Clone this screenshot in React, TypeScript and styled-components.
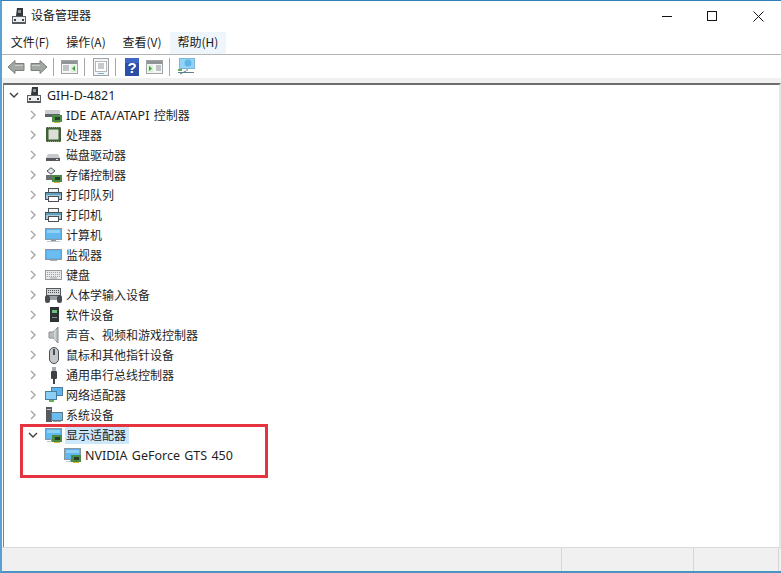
import React from 'react';
import styled, { createGlobalStyle } from 'styled-components';

const GlobalStyle = createGlobalStyle`
  html, body {
    margin: 0;
    padding: 0;
    background: #fff;
  }
  body {
    font-family: "Noto Sans CJK SC", "Liberation Sans", sans-serif;
  }
`;

type IconName =
  | 'device' | 'ide' | 'cpu' | 'disk' | 'storage' | 'printer' | 'computer' | 'monitor' | 'keyboard'
  | 'hid' | 'software' | 'sound' | 'mouse' | 'usb' | 'network' | 'system' | 'display';

const Chip = () => (
  <g>
    <rect x="7" y="8" width="10" height="7" fill="#4a8a44" />
    <rect x="10" y="10" width="5" height="3" fill="#24402a" />
    <rect x="9" y="15" width="6" height="1" fill="#d9b23c" />
  </g>
);

const Screen = () => (
  <g>
    <rect x="0.5" y="1.5" width="16" height="11" fill="#5db3ec" stroke="#8b98a2" />
    <rect x="2" y="3" width="13" height="8" fill="#62b9f0" />
    <rect x="2" y="3" width="13" height="3" fill="#8fd0f6" />
    <rect x="6" y="13" width="5" height="1" fill="#8a949c" />
    <rect x="2" y="14" width="13" height="1" fill="#c0c7cc" />
  </g>
);

const DeviceIcon = ({ name }: { name: IconName }) => {
  switch (name) {
    case 'device':
      return (
        <svg width="16" height="17" viewBox="0 0 16 17">
          <path d="M6 0h6v8H5z" fill="#33373b" />
          <rect x="7" y="2" width="3" height="3" fill="#8d9296" />
          <rect x="1.5" y="8.5" width="13" height="7" fill="#eceeef" stroke="#5c6064" />
          <rect x="3" y="11" width="2" height="2" fill="#3f4347" />
          <rect x="11" y="11" width="2" height="2" fill="#3f4347" />
          <rect x="2" y="14" width="12" height="2" fill="#55595d" />
        </svg>
      );
    case 'ide':
      return (
        <svg width="18" height="16" viewBox="0 0 18 16">
          <rect x="0" y="3" width="15" height="4" rx="1" fill="#c9cdd0" />
          <rect x="0" y="7" width="15" height="3" fill="#5c6165" />
          <Chip />
        </svg>
      );
    case 'cpu':
      return (
        <svg width="18" height="16" viewBox="0 0 18 16">
          <rect x="1" y="0" width="15" height="15" fill="#3f6135" />
          <rect x="3.5" y="2.5" width="10" height="10" fill="#dcdfd6" />
          <path d="M1 0.5h15M1 14.5h15" stroke="#8ba07f" strokeDasharray="1 1" />
        </svg>
      );
    case 'disk':
      return (
        <svg width="18" height="16" viewBox="0 0 18 16">
          <path d="M3 7h10l2 4H1z" fill="#c6c9cc" />
          <rect x="1" y="11" width="14" height="3" fill="#55595d" />
          <rect x="11" y="12" width="2" height="1" fill="#e3e6e8" />
        </svg>
      );
    case 'storage':
      return (
        <svg width="18" height="16" viewBox="0 0 18 16">
          <path d="M2 4 L6 0.8 L10 4 L6 7.2 Z" fill="#e6e8ea" stroke="#4c5054" />
          <rect x="1" y="8" width="8" height="5" fill="#6a6f73" />
          <Chip />
        </svg>
      );
    case 'printer':
      return (
        <svg width="18" height="16" viewBox="0 0 18 16">
          <rect x="3.5" y="1.5" width="10" height="4" fill="#f2f4f5" stroke="#50565c" />
          <rect x="0.5" y="5.5" width="16" height="7" fill="#a9c8d8" stroke="#474d52" />
          <rect x="1" y="6" width="15" height="2" fill="#5fa2bd" />
          <rect x="3.5" y="9.5" width="10" height="5" fill="#fff" stroke="#4a5056" />
        </svg>
      );
    case 'computer':
      return (
        <svg width="18" height="16" viewBox="0 0 18 16">
          <Screen />
        </svg>
      );
    case 'monitor':
      return (
        <svg width="18" height="16" viewBox="0 0 18 16">
          <rect x="0.5" y="2.5" width="16" height="10" fill="#5db3ec" stroke="#8b98a2" />
          <rect x="2" y="4" width="13" height="7" fill="#69bdf1" />
          <rect x="5" y="13" width="7" height="1" fill="#a4adb4" />
        </svg>
      );
    case 'keyboard':
      return (
        <svg width="18" height="16" viewBox="0 0 18 16">
          <rect x="0.5" y="3.5" width="16" height="9" fill="#e7e8ea" stroke="#979b9f" />
          <path d="M2 5.5h13M2 7.5h13M2 9.5h13" stroke="#a2a6aa" strokeDasharray="1 1" />
          <rect x="5" y="10.5" width="7" height="1" fill="#a2a6aa" />
        </svg>
      );
    case 'hid':
      return (
        <svg width="18" height="16" viewBox="0 0 18 16">
          <rect x="1.5" y="1.5" width="14" height="7" fill="#d3d6d9" stroke="#54595e" />
          <path d="M3 3.5h11M3 5.5h11" stroke="#50555a" strokeDasharray="1 1" />
          <rect x="0" y="8" width="5" height="8" rx="2.5" fill="#474c51" />
          <rect x="12" y="8" width="5" height="8" rx="2.5" fill="#474c51" />
          <rect x="5" y="9" width="7" height="4" fill="#9ba0a4" />
        </svg>
      );
    case 'software':
      return (
        <svg width="18" height="16" viewBox="0 0 18 16">
          <rect x="5" y="0" width="9" height="15" fill="#2e3335" />
          <rect x="7" y="3" width="5" height="3" fill="#6cc07a" />
          <rect x="7" y="10" width="5" height="1" fill="#8a8f92" />
        </svg>
      );
    case 'sound':
      return (
        <svg width="18" height="18" viewBox="0 0 18 18">
          <path d="M4 6h4l5-5v16l-5-5H4z" fill="#b7bcbf" stroke="#8a8f93" />
          <path d="M10 3v12" stroke="#e4e6e8" />
        </svg>
      );
    case 'mouse':
      return (
        <svg width="18" height="17" viewBox="0 0 18 17">
          <rect x="4.5" y="0.5" width="9" height="16" rx="4.5" fill="#c5c9cc" stroke="#4a4f53" />
          <rect x="8" y="2" width="2" height="6" fill="#4a4f53" />
        </svg>
      );
    case 'usb':
      return (
        <svg width="18" height="17" viewBox="0 0 18 17">
          <rect x="7" y="0" width="4" height="4" fill="#a6aaad" />
          <rect x="6" y="4" width="6" height="8" rx="1" fill="#3e4246" />
          <rect x="8" y="12" width="2" height="5" fill="#3e4246" />
        </svg>
      );
    case 'network':
      return (
        <svg width="18" height="16" viewBox="0 0 18 16">
          <rect x="6.5" y="0.5" width="11" height="8" fill="#5fb5ec" stroke="#4a7d9e" />
          <rect x="0.5" y="4.5" width="11" height="8" fill="#8ad0f6" stroke="#4a7d9e" />
          <rect x="4" y="13" width="5" height="2" fill="#5fb04f" />
        </svg>
      );
    case 'system':
      return (
        <svg width="18" height="16" viewBox="0 0 18 16">
          <rect x="1" y="0" width="6" height="15" fill="#565b5f" />
          <rect x="2" y="2" width="4" height="1" fill="#c4c8cb" />
          <rect x="6.5" y="5.5" width="11" height="8" fill="#6bbdf0" stroke="#5d7888" />
          <rect x="8" y="14" width="8" height="1" fill="#9aa0a4" />
        </svg>
      );
    case 'display':
      return (
        <svg width="18" height="16" viewBox="0 0 18 16">
          <Screen />
          <Chip />
        </svg>
      );
  }
};

const Window = styled.div`
  width: 781px;
  height: 573px;
  box-sizing: border-box;
  display: flex;
  flex-direction: column;
  background: #fff;
  border-top: 1px solid #2f7fb8;
  border-left: 2px solid #5aa0d0;
  border-bottom: 2px solid #4a94c4;
  overflow: hidden;
`;

const TitleBar = styled.div`
  height: 30px;
  display: flex;
  align-items: center;
  padding-left: 6px;
  flex-shrink: 0;
`;

const TitleText = styled.span`
  font-size: 12px;
  line-height: 16px;
  margin-bottom: 2px;
  color: #1a1a1a;
  flex: 1;
`;

const WindowButton = styled.div`
  width: 45.5px;
  height: 30px;
  display: flex;
  align-items: center;
  justify-content: center;
`;

const MenuBar = styled.div`
  height: 23px;
  display: flex;
  align-items: center;
  padding-left: 0;
  flex-shrink: 0;
  border-bottom: 1px solid #b4b4b4;
`;

const MenuItem = styled.div<{ $active?: boolean }>`
  width: 56px;
  height: 22px;
  text-align: center;
  font-size: 12px;
  line-height: 20px;
  color: #1a1a1a;
  background: ${(p) => (p.$active ? '#eef6fb' : 'transparent')};
`;

const ToolBar = styled.div`
  height: 23px;
  display: flex;
  align-items: center;
  padding-left: 2px;
  flex-shrink: 0;
  background: #fff;
`;

const ToolSeparator = styled.div`
  width: 1px;
  height: 18px;
  margin: 0 4px 0 3px;
  background: #a6a6a6;
`;

const ToolButton = styled.div`
  width: 23px;
  height: 23px;
  display: flex;
  align-items: center;
  justify-content: center;
`;

const PaneGap = styled.div`
  height: 5px;
  flex-shrink: 0;
  background: #f0f0f0;
`;

const TreePane = styled.div`
  flex: 1;
  margin-left: 1px;
  border-top: 2px solid #6d6d6d;
  border-left: 1px solid #7f7f7f;
  border-right: 2px solid #e6e6e6;
  background: #fff;
  min-height: 0;
  position: relative;
`;

const TreeRow = styled.div<{ $level: number }>`
  height: 20px;
  display: flex;
  align-items: center;
  padding-left: ${(p) => 1 + p.$level * 19}px;
`;

const Twist = styled.div`
  width: 18px;
  height: 20px;
  flex-shrink: 0;
  display: flex;
  align-items: center;
  justify-content: center;
`;

const IconSlot = styled.div`
  width: 18px;
  height: 17px;
  flex-shrink: 0;
  margin: 0 2px 0 3px;
  display: flex;
  align-items: center;
`;

const RowLabel = styled.span<{ $selected?: boolean }>`
  font-size: 12px;
  line-height: 18px;
  height: 18px;
  padding: 0 3px 0 1px;
  color: #1f1f1f;
  white-space: nowrap;
  background: ${(p) => (p.$selected ? '#cde8fb' : 'transparent')};
`;

const LatinText = styled.span`
  font-family: "Noto Sans", "Liberation Sans", sans-serif;
  font-size: 12.5px;
  word-spacing: 1px;
`;

const Highlight = styled.div`
  position: absolute;
  left: 16px;
  top: 339px;
  width: 248px;
  height: 54px;
  box-sizing: border-box;
  border: 3px solid #e5343f;
  pointer-events: none;
`;

const StatusBar = styled.div`
  height: 23px;
  flex-shrink: 0;
  background: #f0f0f0;
  border-top: 1px solid #d9d9d9;
  display: flex;
  justify-content: flex-end;
`;

const StatusCell = styled.div<{ $width: number }>`
  width: ${(p) => p.$width}px;
  box-sizing: border-box;
  border-left: 1px solid #d6d6d6;
`;

const StatusEnd = styled.div`
  width: 3px;
  box-sizing: border-box;
  border-left: 1px solid #d6d6d6;
`;

const ChevronRight = () => (
  <svg width="8" height="10" viewBox="0 0 8 10">
    <path d="M2 1 L6 5 L2 9" fill="none" stroke="#a6a6a6" strokeWidth="1.4" />
  </svg>
);

const ChevronDown = () => (
  <svg width="10" height="8" viewBox="0 0 10 8">
    <path d="M1 2 L5 6 L9 2" fill="none" stroke="#404040" strokeWidth="1.4" />
  </svg>
);

const Arrow = ({ flip }: { flip?: boolean }) => (
  <svg width="18" height="16" viewBox="0 0 18 16" style={flip ? { transform: 'scaleX(-1)' } : undefined}>
    <path d="M1 8 L8 1.5 V4.5 H17 V11.5 H8 V14.5 Z" fill="#a3a7a3" stroke="#7b807a" strokeLinejoin="round" />
    <path d="M8 6.5h8" stroke="#c9ccc9" />
  </svg>
);

const PaneIcon = ({ play }: { play?: boolean }) => (
  <svg width="17" height="16" viewBox="0 0 17 16">
    <rect x="0.5" y="1.5" width="16" height="13" fill="#f6f6f6" stroke="#9ea3a7" />
    <rect x="1" y="2" width="15" height="3" fill="#8f9498" />
    <rect x={play ? 2 : 10} y="6" width="5" height="7" fill="#d9efd6" />
    <path d={play ? 'M3 7 L6 9.5 L3 12 Z' : 'M14 7 L11 9.5 L14 12 Z'} fill="#3f9a3f" />
    <path d={play ? 'M10 7h5M10 9h5M10 11h5' : 'M2 7h6M2 9h6M2 11h6'} stroke="#8a8f93" />
  </svg>
);

interface Row {
  label: string;
  latin?: string;
  icon: IconName;
}

const rows: Row[] = [
  { label: '控制器', latin: 'IDE ATA/ATAPI ', icon: 'ide' },
  { label: '处理器', icon: 'cpu' },
  { label: '磁盘驱动器', icon: 'disk' },
  { label: '存储控制器', icon: 'storage' },
  { label: '打印队列', icon: 'printer' },
  { label: '打印机', icon: 'printer' },
  { label: '计算机', icon: 'computer' },
  { label: '监视器', icon: 'monitor' },
  { label: '键盘', icon: 'keyboard' },
  { label: '人体学输入设备', icon: 'hid' },
  { label: '软件设备', icon: 'software' },
  { label: '声音、视频和游戏控制器', icon: 'sound' },
  { label: '鼠标和其他指针设备', icon: 'mouse' },
  { label: '通用串行总线控制器', icon: 'usb' },
  { label: '网络适配器', icon: 'network' },
  { label: '系统设备', icon: 'system' },
];

const menus = ['文件(F)', '操作(A)', '查看(V)', '帮助(H)'];

export default function App() {
  return (
    <>
      <GlobalStyle />
      <Window>
        <TitleBar>
          <IconSlot><DeviceIcon name="device" /></IconSlot>
          <TitleText>设备管理器</TitleText>
          <WindowButton>
            <svg width="11" height="11" viewBox="0 0 11 11">
              <path d="M0 5.5h10" stroke="#111" />
            </svg>
          </WindowButton>
          <WindowButton>
            <svg width="11" height="11" viewBox="0 0 11 11">
              <rect x="0.5" y="0.5" width="9" height="9" fill="none" stroke="#111" />
            </svg>
          </WindowButton>
          <WindowButton>
            <svg width="11" height="11" viewBox="0 0 11 11">
              <path d="M0.5 0.5l10 10M10.5 0.5l-10 10" stroke="#111" />
            </svg>
          </WindowButton>
        </TitleBar>
        <MenuBar>
          {menus.map((m, i) => (
            <MenuItem key={m} $active={i === 3}>{m}</MenuItem>
          ))}
        </MenuBar>
        <ToolBar>
          <ToolButton><Arrow /></ToolButton>
          <ToolButton><Arrow flip /></ToolButton>
          <ToolSeparator />
          <ToolButton><PaneIcon /></ToolButton>
          <ToolSeparator />
          <ToolButton>
            <svg width="16" height="18" viewBox="0 0 16 18">
              <rect x="0.5" y="0.5" width="15" height="17" fill="#f4f4f4" stroke="#9ea3a7" />
              <rect x="2.5" y="3.5" width="11" height="10" fill="#fff" stroke="#b4b8bb" />
              <path d="M5 6h6M5 8h6M5 10h6" stroke="#8f9498" />
              <rect x="5" y="15" width="6" height="1" fill="#6fb3dc" />
            </svg>
          </ToolButton>
          <ToolSeparator />
          <ToolButton>
            <svg width="14" height="18" viewBox="0 0 14 18">
              <rect x="0" y="0" width="14" height="18" fill="#2c4ea8" />
              <rect x="0" y="0" width="14" height="5" fill="#3f66c4" />
              <text x="7" y="14.5" textAnchor="middle" fontSize="15" fontWeight="700" fill="#fff" fontFamily="Liberation Sans">?</text>
            </svg>
          </ToolButton>
          <ToolButton><PaneIcon play /></ToolButton>
          <ToolSeparator />
          <ToolButton>
            <svg width="18" height="17" viewBox="0 0 18 17">
              <rect x="2.5" y="0.5" width="15" height="10" fill="#93d3f7" stroke="#7fb5d6" />
              <circle cx="11" cy="5" r="3.5" fill="#5fb4ea" />
              <path d="M10 11v2M1 14.5h16M9 13L3 16" stroke="#5e7f8f" fill="none" />
              <rect x="1" y="11" width="4" height="2" fill="#5fb04f" />
            </svg>
          </ToolButton>
        </ToolBar>
        <PaneGap />
        <TreePane>
          <TreeRow $level={0}>
            <Twist><ChevronDown /></Twist>
            <IconSlot><DeviceIcon name="device" /></IconSlot>
            <RowLabel><LatinText>GIH-D-4821</LatinText></RowLabel>
          </TreeRow>
          {rows.map((r) => (
            <TreeRow key={r.label} $level={1}>
              <Twist><ChevronRight /></Twist>
              <IconSlot><DeviceIcon name={r.icon} /></IconSlot>
              <RowLabel>
                {r.latin && <LatinText>{r.latin}</LatinText>}
                {r.label}
              </RowLabel>
            </TreeRow>
          ))}
          <TreeRow $level={1}>
            <Twist><ChevronDown /></Twist>
            <IconSlot><DeviceIcon name="display" /></IconSlot>
            <RowLabel $selected>显示适配器</RowLabel>
          </TreeRow>
          <TreeRow $level={2}>
            <Twist />
            <IconSlot><DeviceIcon name="display" /></IconSlot>
            <RowLabel><LatinText>NVIDIA GeForce GTS 450</LatinText></RowLabel>
          </TreeRow>
          <Highlight />
        </TreePane>
        <StatusBar>
          <StatusCell $width={132} />
          <StatusCell $width={85} />
          <StatusEnd />
        </StatusBar>
      </Window>
    </>
  );
}
